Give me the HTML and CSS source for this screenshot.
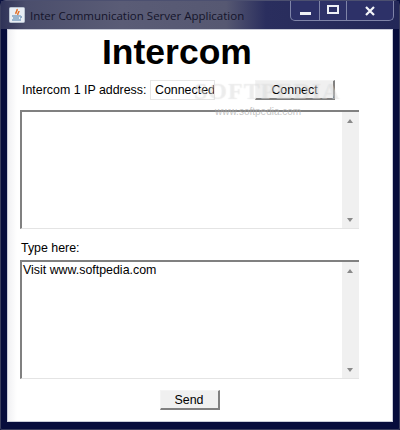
FILE: index.html
```html
<!DOCTYPE html>
<html lang="en">
<head>
  <meta charset="UTF-8">
  <title>Inter Communication Server Application</title>
  <link rel="stylesheet" href="styles.css">
</head>
<body>

<div class="window">
  <div class="titlebar">
    <div class="app-icon">
      <svg width="16" height="16" viewBox="0 0 16 16">
        <rect x="0.5" y="0.5" width="15" height="15" rx="1" fill="#e8eef5" stroke="#b8c2d0"/>
        <path d="M8 2c1 2-2 3-1 5M10 4c0 2-2 2-1 4" fill="none" stroke="#e2681c" stroke-width="1.4"/>
        <path d="M3 9h8M4 11h6M3 13h9" stroke="#4b7aa8" stroke-width="1.1"/>
        <path d="M11 9c2 0 2 2 0 2" fill="none" stroke="#4b7aa8"/>
      </svg>
    </div>
    <div class="title">Inter Communication Server Application</div>
    <div class="controls">
      <div class="ctl ctl-min"><span class="min-bar"></span></div>
      <div class="ctl ctl-max"><span class="max-box"></span></div>
      <div class="ctl ctl-close">
        <svg width="12" height="10" viewBox="0 0 12 10">
          <path d="M2 1l8 8M10 1l-8 8" stroke="#f4f6fa" stroke-width="2.2"/>
        </svg>
      </div>
    </div>
  </div>

  <div class="client">
    <h1>Intercom</h1>

    <div class="ip-row">
      <label class="ip-label">Intercom 1 IP address:</label>
      <div class="ip-field">Connected</div>
      <button class="btn btn-connect">Connect</button>
    </div>

    <div class="textarea">
      <div class="textarea-body"></div>
      <div class="scroll">
        <span class="arrow-up"></span>
        <span class="arrow-down"></span>
      </div>
    </div>

    <div class="type-label">Type here:</div>

    <div class="textarea">
      <div class="textarea-body">Visit www.softpedia.com</div>
      <div class="scroll">
        <span class="arrow-up"></span>
        <span class="arrow-down"></span>
      </div>
    </div>

    <div class="send-row">
      <button class="btn btn-send">Send</button>
    </div>

    <div class="wm">SOFTPEDIA</div>
    <div class="wm-url">www.softpedia.com</div>
  </div>
</div>

</body>
</html>
```

FILE: styles.css
```css
html, body {
  margin: 0;
  padding: 0;
}

body {
  width: 400px;
  height: 430px;
  overflow: hidden;
  background: #0a1140;
  font-family: "Liberation Sans", Arial, sans-serif;
  font-size: 12.4px;
  color: #000;
}

.window {
  width: 400px;
  height: 430px;
  box-sizing: border-box;
  padding: 0 6px 7px;
  display: flex;
  flex-direction: column;
  background: #070d3c;
  border: 1px solid #3b3f5e;
  border-top-color: #4c5070;
  border-radius: 6px 6px 2px 2px;
}

.titlebar {
  height: 28px;
  flex: none;
  margin: 0 -6px;
  padding: 0 6px;
  display: flex;
  align-items: flex-start;
  background: linear-gradient(90deg, #2f3358 0, #4b4e6c 25px, #5a5c76 120px, #565872 225px, #2a2e5e 265px, #232858 100%);
}

.app-icon {
  width: 16px;
  height: 16px;
  margin: 6px 0 0 2px;
}

.title {
  margin: 7px 0 0 5px;
  line-height: 16px;
  font-size: 11.5px;
  font-family: "Open Sans", "DejaVu Sans", sans-serif;
  color: #14142a;
}

.controls {
  margin-left: auto;
  margin-right: -1px;
  display: flex;
  height: 20px;
  box-sizing: border-box;
  background: #2d3168;
  border: 1px solid #7f84a8;
  border-top: 0;
  border-radius: 0 0 5px 5px;
}

.ctl {
  display: flex;
  align-items: center;
  justify-content: center;
  border-right: 1px solid #7f84a8;
  height: 19px;
}

.ctl-min {
  width: 28px;
}

.ctl-max {
  width: 26px;
}

.ctl-close {
  width: 46px;
  border-right: 0;
}

.min-bar {
  width: 11px;
  height: 3px;
  margin-top: 5px;
  background: #eef0f6;
}

.max-box {
  width: 8px;
  height: 5px;
  border: 2px solid #eef0f6;
  margin-bottom: 3px;
}

.client {
  flex: 1;
  position: relative;
  background: linear-gradient(90deg, #f1f1f3 0, #fff 9px);
  border: 1px solid #c9ccd8;
  box-sizing: border-box;
  padding: 0 33px 0 12px;
  display: flex;
  flex-direction: column;
}

h1 {
  margin: 0;
  height: 50px;
  padding-left: 82px;
  font-size: 35.5px;
  line-height: 44px;
  font-weight: bold;
  color: #000;
}

.ip-row {
  height: 20px;
  display: flex;
  align-items: center;
}

.ip-label {
  width: 130px;
  padding-left: 2px;
  box-sizing: border-box;
  white-space: nowrap;
}

.ip-field {
  width: 65px;
  height: 20px;
  box-sizing: border-box;
  padding: 0 0 0 4px;
  line-height: 18px;
  border: 1px solid #e6e6e6;
  white-space: nowrap;
  overflow: hidden;
}

.btn {
  font-family: inherit;
  font-size: 12.4px;
  color: #000;
  padding: 0;
  height: 20px;
  background: #f0f0f0;
  border: 1px solid #f4f4f4;
  border-right: 2px solid #808080;
  border-bottom: 2px solid #808080;
}

.btn-connect {
  width: 80px;
  margin-left: 40px;
}

.textarea {
  width: 339px;
  height: 119px;
  margin-top: 10px;
  box-sizing: border-box;
  display: flex;
  flex: none;
  border-top: 2px solid #808080;
  border-left: 2px solid #808080;
  border-bottom: 1px solid #e4e4e4;
}

.textarea-body {
  flex: 1;
  padding: 1px 0 0 1px;
  line-height: 15px;
}

.scroll {
  width: 17px;
  background: #f0f0f0;
  position: relative;
}

.arrow-up, .arrow-down {
  position: absolute;
  left: 5px;
  width: 0;
  height: 0;
  border-left: 3px solid transparent;
  border-right: 3px solid transparent;
}

.arrow-up {
  top: 7px;
  border-bottom: 4px solid #8a8a8a;
}

.arrow-down {
  bottom: 6px;
  border-top: 4px solid #8a8a8a;
}

.type-label {
  height: 21px;
  margin-top: 10px;
  line-height: 19px;
  padding-left: 1px;
}

.type-label + .textarea {
  margin-top: 0;
}

.send-row {
  display: flex;
  justify-content: center;
  width: 339px;
  margin-top: 11px;
}

.btn-send {
  width: 60px;
}

.wm {
  position: absolute;
  left: 186px;
  top: 48px;
  font-family: "Liberation Serif", serif;
  font-size: 24px;
  font-weight: bold;
  letter-spacing: 1px;
  color: rgba(255, 255, 255, 0.3);
  text-shadow: 0 0 1px rgba(150, 150, 150, 0.25);
  pointer-events: none;
}

.wm-url {
  position: absolute;
  left: 207px;
  top: 76px;
  font-size: 10px;
  color: rgba(170, 170, 170, 0.7);
  pointer-events: none;
}
```
